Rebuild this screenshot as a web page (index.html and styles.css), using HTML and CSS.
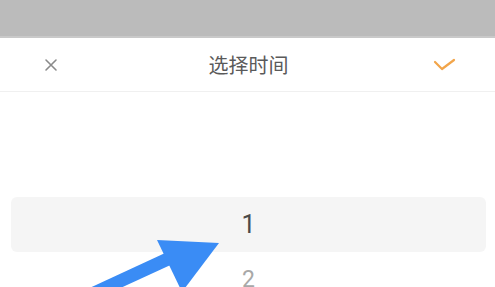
FILE: index.html
```html
<!DOCTYPE html>
<html lang="zh">
<head>
<meta charset="utf-8">
<link rel="stylesheet" href="styles.css">
</head>
<body>
<div class="status"></div>
<div class="sheet">
  <div class="header">
    <span class="close">
      <svg width="14" height="14" viewBox="0 0 14 14"><path d="M2 2L12 12M12 2L2 12" stroke="#8a8a8a" stroke-width="1.6" fill="none" stroke-linecap="round"/></svg>
    </span>
    <span class="title">选择时间</span>
    <span class="ok">
      <svg width="24" height="16" viewBox="0 0 24 16"><path d="M2 5L9 12L21 3" stroke="#f2a54a" stroke-width="2.2" fill="none" stroke-linecap="round" stroke-linejoin="round"/></svg>
    </span>
  </div>
  <div class="picker">
    <div class="row selected">1</div>
    <div class="row">2</div>
  </div>
</div>
<svg class="arrow" width="495" height="287" viewBox="0 0 495 287">
  <path d="M92 294L170 258" stroke="#3a8cf5" stroke-width="13" fill="none"/>
  <polygon points="157,240 219,243 182,292" fill="#3a8cf5"/>
</svg>
</body>
</html>
```
FILE: styles.css
```css
html, body {
  margin: 0;
  padding: 0;
  width: 495px;
  height: 287px;
  overflow: hidden;
  background: #ffffff;
  font-family: "Noto Sans CJK SC", "Noto Sans", sans-serif;
}
.status {
  height: 36px;
  background: #bbbbbb;
  border-bottom: 2px solid #c9c9c9;
}
.sheet {
  background: #fff;
}
.header {
  height: 53px;
  display: flex;
  align-items: center;
  justify-content: space-between;
  padding: 0 38px 0 44px;
  border-bottom: 1px solid #f0f0f0;
}
.close, .ok {
  display: flex;
  width: 24px;
  justify-content: center;
}
.close { justify-content: flex-start; }
.title {
  font-size: 20px;
  color: #5a5a5a;
  margin-left: -4px;
}
.picker {
  padding: 105px 9px 0 11px;
}
.row {
  height: 55px;
  display: flex;
  align-items: center;
  justify-content: center;
  font-family: "Roboto", "Noto Sans", sans-serif;
  font-size: 23px;
  color: #a8a8a8;
}
.row.selected {
  background: #f5f5f5;
  border-radius: 6px;
  color: #4a4a4a;
  font-size: 25px;
}
.arrow {
  position: absolute;
  left: 0;
  top: 0;
}
```
